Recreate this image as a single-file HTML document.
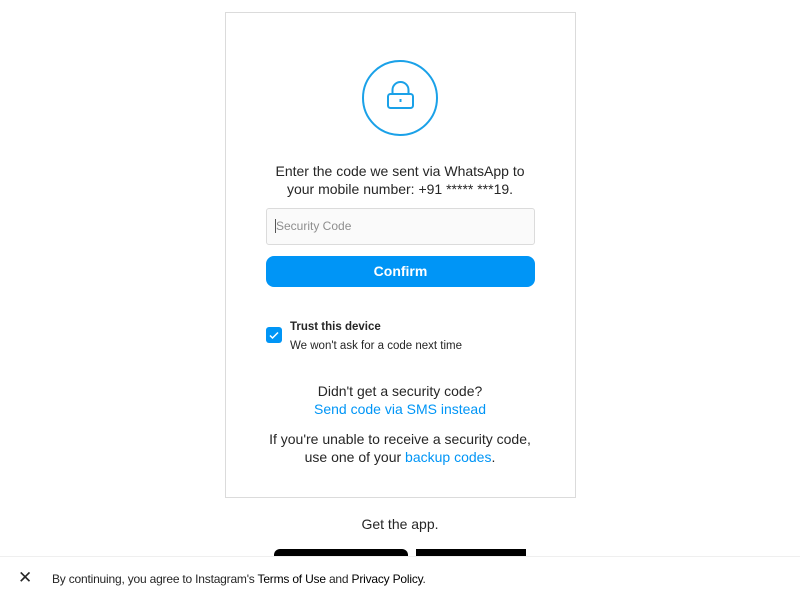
<!DOCTYPE html>
<html><head><style>
body{margin:0;width:800px;height:600px;overflow:hidden;background:#fff;font-family:"Liberation Sans",sans-serif;color:#262626;position:relative}
.card{position:absolute;left:225px;top:12px;width:351px;height:486px;border:1px solid #dbdbdb;box-sizing:border-box}
.abs{position:absolute}
.c{text-align:center}
</style></head><body>
<div class="card"></div>
<svg class="abs" style="left:361px;top:59px" width="78" height="78" viewBox="0 0 78 78">
<circle cx="39" cy="39" r="37" fill="none" stroke="#1aa1e8" stroke-width="2"/>
<rect x="27" y="35" width="25" height="14" rx="2.5" fill="none" stroke="#1aa1e8" stroke-width="2"/>
<path d="M31.5 35v-4a8 8 0 0 1 16 0v4" fill="none" stroke="#1aa1e8" stroke-width="2"/>
<rect x="38.5" y="40" width="2" height="3" fill="#1aa1e8"/>
</svg>
<div class="abs c" style="left:225px;width:350px;top:162px;font-size:14px;line-height:18px">Enter the code we sent via WhatsApp to<br>your mobile number: +91 ***** ***19.</div>
<div class="abs" style="left:266px;top:208px;width:269px;height:37px;box-sizing:border-box;border:1px solid #dbdbdb;border-radius:3px;background:#fafafa;font-size:12px;color:#8e8e8e;line-height:35px;padding-left:8px"><span style="border-left:1px solid #555;padding-left:0"></span>Security Code</div>
<div class="abs c" style="left:266px;top:256px;width:269px;height:31px;border-radius:8px;background:#0095f6;color:#fff;font-weight:bold;font-size:14px;line-height:31px">Confirm</div>
<div class="abs" style="left:266px;top:327px;width:16px;height:16px;border-radius:3px;background:#0095f6"><svg width="16" height="16"><path d="M4 8.5l2.5 2.5L12 5.5" stroke="#fff" stroke-width="1.5" fill="none"/></svg></div>
<div class="abs" style="left:290px;top:318px;font-size:11.5px;line-height:19px"><b style="font-weight:600">Trust this device</b><br>We won't ask for a code next time</div>
<div class="abs c" style="left:225px;width:350px;top:382px;font-size:14px;line-height:18px">Didn't get a security code?<br><span style="color:#0095f6">Send code via SMS instead</span></div>
<div class="abs c" style="left:225px;width:350px;top:430px;font-size:14px;line-height:18px">If you're unable to receive a security code,<br>use one of your <span style="color:#0095f6">backup codes</span>.</div>
<div class="abs c" style="left:225px;width:350px;top:516px;font-size:14px">Get the app.</div>
<div class="abs" style="left:274px;top:549px;width:134px;height:20px;background:#000;border-radius:6px"></div>
<div class="abs" style="left:416px;top:549px;width:110px;height:20px;background:#000"></div>
<div class="abs" style="left:0;top:556px;width:800px;height:44px;background:#fff;border-top:1px solid #efefef"></div>
<div class="abs" style="left:18px;top:569px;font-size:17px;line-height:18px">✕</div>
<div class="abs" style="left:52px;top:572px;font-size:12px;letter-spacing:-0.2px">By continuing, you agree to Instagram's <span style="color:#000">Terms of Use</span> and <span style="color:#000">Privacy Policy</span>.</div>
</body></html>
